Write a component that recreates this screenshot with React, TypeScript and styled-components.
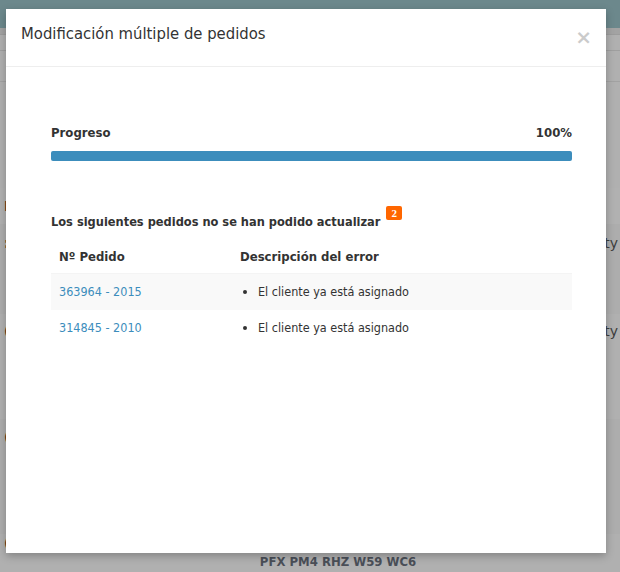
import React from "react";
import styled, { createGlobalStyle } from "styled-components";

const Global = createGlobalStyle`
  html, body { margin: 0; padding: 0; }
  body { width: 620px; height: 572px; overflow: hidden; font-family: "DejaVu Sans Condensed", "DejaVu Sans", sans-serif; }
`;

const Page = styled.div`
  position: relative;
  width: 620px;
  height: 572px;
  background: #b0b0b0;
  overflow: hidden;
  display: flex;
  flex-direction: column;
`;

const TopBar = styled.div`
  height: 28px;
  flex: none;
  background: #6c888c;
`;

const SubBar = styled.div`
  height: 6px;
  flex: none;
  background: #a3a3a3;
  border-bottom: 1px solid #9c9c9c;
`;

const Toolbar = styled.div`
  height: 15px;
  flex: none;
  border-bottom: 1px solid #9f9f9f;
`;

const Filters = styled.div`
  height: 30px;
  flex: none;
  border-bottom: 1px solid #a2a2a2;
`;

const BgRow = styled.div<{ $h: number; $shade: string }>`
  height: ${(p) => p.$h}px;
  flex: none;
  background: ${(p) => p.$shade};
  display: flex;
  align-items: center;
  justify-content: space-between;
  padding: 0 2px 0 4px;
  font-family: "DejaVu Sans", sans-serif;
  font-size: 14px;
  color: #3d3d3d;
`;

const BgMark = styled.span`
  color: #4a2a18;
  font-weight: bold;
`;

const BgFooter = styled.div`
  flex: 1;
  text-align: center;
  padding-left: 56px;
  font-weight: bold;
  font-size: 13px;
  line-height: 19px;
  color: #4a4f58;
  font-family: "DejaVu Sans Condensed", sans-serif;
`;

const Modal = styled.div`
  position: absolute;
  top: 9px;
  left: 6px;
  width: 600px;
  height: 544px;
  background: #fff;
  box-shadow: 0 3px 8px rgba(0, 0, 0, 0.25);
  font-family: "DejaVu Sans Condensed", "DejaVu Sans", sans-serif;
  color: #333;
`;

const Header = styled.div`
  height: 58px;
  border-bottom: 1px solid #eeeeee;
  display: flex;
  align-items: flex-start;
  justify-content: space-between;
  padding: 13px 14px 0 15px;
  box-sizing: border-box;
`;

const Title = styled.h4`
  margin: 0;
  font-size: 16.5px;
  font-weight: normal;
  line-height: 24px;
  color: #333;
`;

const Close = styled.button`
  border: 0;
  background: none;
  padding: 0;
  margin-top: 5px;
  font-size: 20px;
  font-weight: bold;
  line-height: 20px;
  color: #000;
  opacity: 0.2;
  font-family: "DejaVu Sans", sans-serif;
  cursor: pointer;
`;

const Body = styled.div`
  padding: 58px 34px 0 45px;
`;

const ProgressHead = styled.div`
  display: flex;
  justify-content: space-between;
  font-size: 13px;
  font-weight: bold;
  line-height: 16px;
  color: #333;
`;

const Track = styled.div`
  margin-top: 10px;
  height: 10px;
  background: #f5f5f5;
  border-radius: 2px;
  overflow: hidden;
`;

const Fill = styled.div`
  height: 100%;
  background: #3c8dbc;
`;

const ErrorTitle = styled.div`
  margin-top: 53px;
  font-size: 12.7px;
  font-weight: bold;
  color: #333;
  line-height: 16px;
  display: flex;
  align-items: flex-start;
`;

const Badge = styled.span`
  display: inline-block;
  background: #ff6600;
  color: #fff;
  font-size: 11px;
  font-weight: bold;
  line-height: 14px;
  padding: 0 5px;
  border-radius: 2px;
  margin-left: 6px;
  margin-top: -8px;
  font-family: "Liberation Serif", serif;
`;

const Table = styled.table`
  margin-top: 10px;
  width: 100%;
  border-collapse: collapse;
  font-size: 12.5px;
`;

const Th = styled.th<{ $w?: number }>`
  text-align: left;
  font-weight: bold;
  font-size: 13px;
  padding: 9px 8px 9px 8px;
  color: #333;
  border-bottom: 1px solid #f4f4f4;
  width: ${(p) => (p.$w ? `${p.$w}px` : "auto")};
`;

const Tr = styled.tr<{ $striped?: boolean }>`
  background: ${(p) => (p.$striped ? "#f9f9f9" : "#fff")};
`;

const Td = styled.td`
  padding: 10px 8px 11px;
  line-height: 15px;
  vertical-align: top;
`;

const Link = styled.a`
  color: #3c8dbc;
  text-decoration: none;
`;

const List = styled.ul`
  margin: 0;
  padding-left: 18px;
  color: #333;
`;

const rows = [
  { id: "363964 - 2015", err: "El cliente ya está asignado" },
  { id: "314845 - 2010", err: "El cliente ya está asignado" },
];

export default function App() {
  return (
    <Page>
      <Global />
      <TopBar />
      <SubBar />
      <Toolbar />
      <Filters />
      <BgRow $h={106} $shade="#b0b0b0" />
      <BgRow $h={36} $shade="#b1b1b1">
        <BgMark>I</BgMark>
      </BgRow>
      <BgRow $h={38} $shade="#adadad">
        <BgMark>:</BgMark>
        <span>ty</span>
      </BgRow>
      <BgRow $h={52} $shade="#adadad" />
      <BgRow $h={34} $shade="#b0b0b0">
        <BgMark>(</BgMark>
        <span>ty</span>
      </BgRow>
      <BgRow $h={71} $shade="#b0b0b0" />
      <BgRow $h={36} $shade="#adadad">
        <BgMark>(</BgMark>
      </BgRow>
      <BgRow $h={79} $shade="#adadad" />
      <BgRow $h={18} $shade="#b0b0b0">
        <BgMark>(</BgMark>
      </BgRow>
      <BgFooter>PFX PM4 RHZ W59 WC6</BgFooter>
      <Modal>
        <Header>
          <Title>Modificación múltiple de pedidos</Title>
          <Close aria-label="Cerrar">×</Close>
        </Header>
        <Body>
          <ProgressHead>
            <span>Progreso</span>
            <span>100%</span>
          </ProgressHead>
          <Track>
            <Fill style={{ width: "100%" }} />
          </Track>
          <ErrorTitle>
            Los siguientes pedidos no se han podido actualizar
            <Badge>2</Badge>
          </ErrorTitle>
          <Table>
            <thead>
              <tr>
                <Th $w={165}>Nº Pedido</Th>
                <Th>Descripción del error</Th>
              </tr>
            </thead>
            <tbody>
              {rows.map((r, i) => (
                <Tr key={r.id} $striped={i % 2 === 0}>
                  <Td>
                    <Link href="#">{r.id}</Link>
                  </Td>
                  <Td>
                    <List>
                      <li>{r.err}</li>
                    </List>
                  </Td>
                </Tr>
              ))}
            </tbody>
          </Table>
        </Body>
      </Modal>
    </Page>
  );
}
